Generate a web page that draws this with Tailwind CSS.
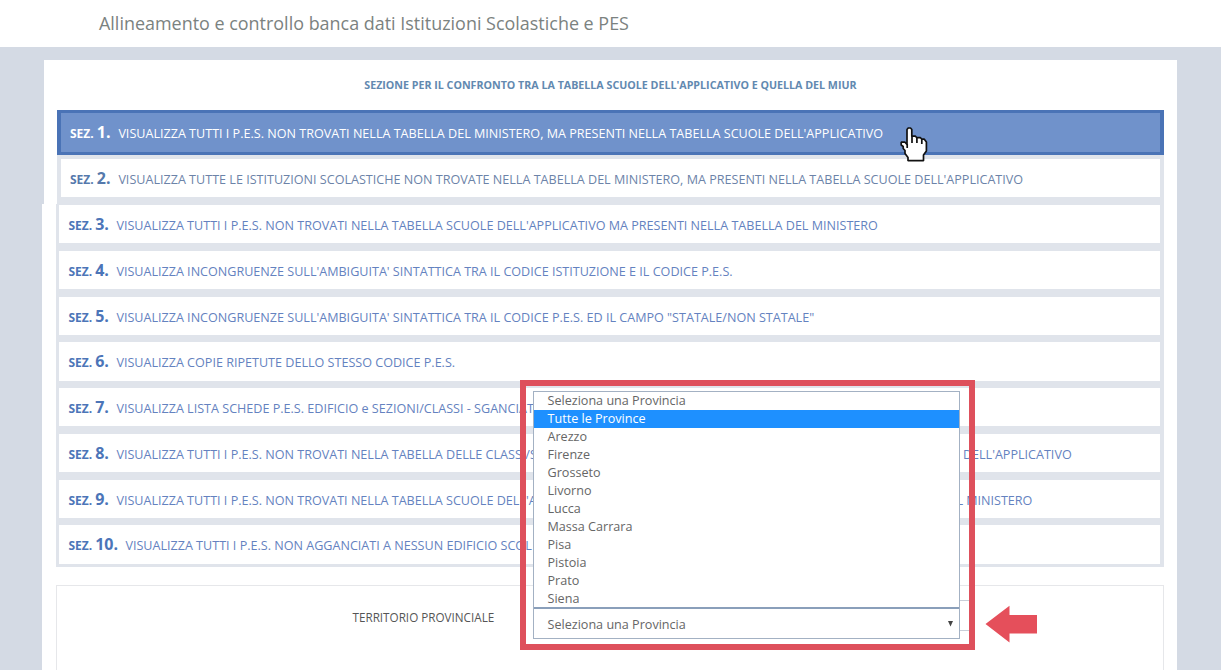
<!DOCTYPE html>
<html lang="it">
<head>
<meta charset="utf-8">
<title>Allineamento e controllo banca dati</title>
<script src="https://cdn.jsdelivr.net/npm/@tailwindcss/browser@4"></script>
</head>
<body class="relative h-[670px] w-[1221px] overflow-hidden bg-[#d4dae4] font-['Open_Sans',sans-serif] text-[12.58px]">
<header class="flex h-[47px] items-center bg-white pl-[99px] text-[17.95px] text-[#7b8280]"><span class="whitespace-nowrap">Allineamento e controllo banca dati Istituzioni Scolastiche e PES</span></header>
<main class="pt-[13px]">
  <section class="mr-[44px] ml-[44px] h-[144px] bg-white pr-[13.5px] pl-[13.4px]">
    <h2 class="flex h-[49.6px] items-center justify-center pt-[1px] text-[10.68px] font-bold text-[#6289b0]"><span class="whitespace-nowrap">SEZIONE PER IL CONFRONTO TRA LA TABELLA SCUOLE DELL'APPLICATIVO E QUELLA DEL MIUR</span></h2>
    <div class="h-[45.78px] bg-[#4a73b6] p-[3.6px]"><div class="flex h-full items-baseline bg-[#7092cb] pl-[9px] leading-[38px] text-white"><b class="w-[48.400px] text-[12px] whitespace-nowrap">SEZ. <span class="text-[16px]">1.</span></b><span class="whitespace-nowrap">VISUALIZZA TUTTI I P.E.S. NON TROVATI NELLA TABELLA DEL MINISTERO, MA PRESENTI NELLA TABELLA SCUOLE DELL'APPLICATIVO</span></div></div>
    <div class="h-[48.6px] bg-[#e0e4eb] p-[3.6px] pb-[7px]"><div class="flex h-[38px] items-baseline bg-white pl-[9px] leading-[38px] text-[#6c83a8]"><b class="w-[48.400px] text-[12px] whitespace-nowrap text-[#5579ac]">SEZ. <span class="text-[16px]">2.</span></b><span class="whitespace-nowrap">VISUALIZZA TUTTE LE ISTITUZIONI SCOLASTICHE NON TROVATE NELLA TABELLA DEL MINISTERO, MA PRESENTI NELLA TABELLA SCUOLE DELL'APPLICATIVO</span></div></div>
  </section>
  <section class="mr-[44px] ml-[42px] h-[466px] bg-white pr-[13.5px] pl-[14px] text-[#6482c0]">
    <div class="flex flex-col gap-[7.5px] bg-[#e0e4eb] px-[3.4px] pt-[1px] pb-[3.5px]">
      <div class="flex h-[38.28px] items-baseline bg-white pl-[9px] leading-[38px]"><b class="w-[48px] text-[12px] whitespace-nowrap text-[#4c75b8]">SEZ. <span class="text-[16px]">3.</span></b><span class="whitespace-nowrap">VISUALIZZA TUTTI I P.E.S. NON TROVATI NELLA TABELLA SCUOLE DELL'APPLICATIVO MA PRESENTI NELLA TABELLA DEL MINISTERO</span></div>
      <div class="flex h-[38.28px] items-baseline bg-white pl-[9px] leading-[38px]"><b class="w-[48px] text-[12px] whitespace-nowrap text-[#4c75b8]">SEZ. <span class="text-[16px]">4.</span></b><span class="whitespace-nowrap">VISUALIZZA INCONGRUENZE SULL'AMBIGUITA' SINTATTICA TRA IL CODICE ISTITUZIONE E IL CODICE P.E.S.</span></div>
      <div class="flex h-[38.28px] items-baseline bg-white pl-[9px] leading-[38px]"><b class="w-[48px] text-[12px] whitespace-nowrap text-[#4c75b8]">SEZ. <span class="text-[16px]">5.</span></b><span class="whitespace-nowrap">VISUALIZZA INCONGRUENZE SULL'AMBIGUITA' SINTATTICA TRA IL CODICE P.E.S. ED IL CAMPO "STATALE/NON STATALE"</span></div>
      <div class="flex h-[38.28px] items-baseline bg-white pl-[9px] leading-[38px]"><b class="w-[48px] text-[12px] whitespace-nowrap text-[#4c75b8]">SEZ. <span class="text-[16px]">6.</span></b><span class="whitespace-nowrap">VISUALIZZA COPIE RIPETUTE DELLO STESSO CODICE P.E.S.</span></div>
      <div class="flex h-[38.28px] items-baseline bg-white pl-[9px] leading-[38px]"><b class="w-[48px] text-[12px] whitespace-nowrap text-[#4c75b8]">SEZ. <span class="text-[16px]">7.</span></b><span class="whitespace-nowrap">VISUALIZZA LISTA SCHEDE P.E.S. EDIFICIO e SEZIONI/CLASSI - SGANCIAT</span></div>
      <div class="flex h-[38.28px] items-baseline bg-white pl-[9px] leading-[38px]"><b class="w-[48px] text-[12px] whitespace-nowrap text-[#4c75b8]">SEZ. <span class="text-[16px]">8.</span></b><span class="w-[846.500px] whitespace-nowrap">VISUALIZZA TUTTI I P.E.S. NON TROVATI NELLA TABELLA DELLE CLASSI/S</span><span class="whitespace-nowrap">DELL'APPLICATIVO</span></div>
      <div class="flex h-[38.28px] items-baseline bg-white pl-[9px] leading-[38px]"><b class="w-[48px] text-[12px] whitespace-nowrap text-[#4c75b8]">SEZ. <span class="text-[16px]">9.</span></b><span class="w-[840px] whitespace-nowrap">VISUALIZZA TUTTI I P.E.S. NON TROVATI NELLA TABELLA SCUOLE DELL'A</span><span class="whitespace-nowrap">L MINISTERO</span></div>
      <div class="flex h-[38.28px] items-baseline bg-white pl-[9px] leading-[38px]"><b class="w-[57px] text-[12px] whitespace-nowrap text-[#4c75b8]">SEZ. <span class="text-[16px]">10.</span></b><span class="whitespace-nowrap">VISUALIZZA TUTTI I P.E.S. NON AGGANCIATI A NESSUN EDIFICIO SCOL</span></div>
    </div>
    <div class="mt-[18px] flex h-[100px] items-start border border-[#e6e7ea] pt-[14px] pl-[295.500px] text-[11.7px] text-[#555]">
      <span class="w-[190px] leading-[34px] whitespace-nowrap">TERRITORIO PROVINCIALE</span>
      <div class="h-[31px] w-[427px] border border-[#c9ced8]"></div>
    </div>
  </section>
</main>
<div class="absolute top-[380px] left-[520px] h-[270px] w-[455px] border-[6px] border-[#de505c] pt-[5px] pl-[6.5px]">
  <div class="h-[247.5px] w-[427.5px] border border-[#a3b1c3] bg-white text-[12.6px] leading-[18px] text-[#666]">
    <ul class="h-[217px] border-b-2 border-[#8a9fba] [&>li]:h-[18px] [&>li]:pl-[14px] [&>li]:leading-[17px]">
      <li>Seleziona una Provincia</li><li class="bg-[#1e90ff] text-white">Tutte le Province</li><li>Arezzo</li><li>Firenze</li><li>Grosseto</li><li>Livorno</li><li>Lucca</li><li>Massa Carrara</li><li>Pisa</li><li>Pistoia</li><li>Prato</li><li>Siena</li>
    </ul>
    <div class="flex h-[29px] items-center justify-between pr-[6px] pl-[14px]"><span class="pt-[2px]">Seleziona una Provincia</span><svg width="5" height="6" viewBox="0 0 5 6"><path d="M0 0h5L2.5 5.5z" fill="#444"/></svg></div>
  </div>
</div>
<svg class="absolute top-[605px] left-[985px]" width="53" height="38" viewBox="0 0 53 38"><path d="M.5 19 24.500.8V10H52V28.500H24.500V37.500Z" fill="#e54f5b"/></svg>
<svg class="absolute top-[127px] left-[900px]" width="28" height="35" viewBox="0 0 28 35"><path d="M8 33.700V30.500L5 26.500V23.500L3.200 21.500V19.500L1.200 18V15.200H5L7 17.500V2.500L8.200 1H10.500L11.800 2.500V9.200H15.500L16.800 10.700H20.500L21.800 12.200H24.300L26.400 15V24L23.500 28V33.700Z" fill="#fff" stroke="#111" stroke-width="1.700" stroke-linejoin="bevel"/><path d="M7.200 17v4M12 9v7M16.900 10.500v5.500M21.800 12v5" stroke="#111" stroke-width="1.700"/></svg>
</body>
</html>
